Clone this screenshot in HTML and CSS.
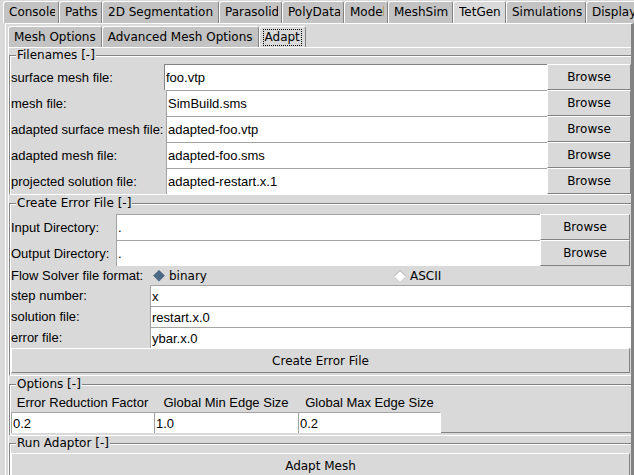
FILE: index.html
```html
<!DOCTYPE html>
<html>
<head>
<meta charset="utf-8">
<link rel="stylesheet" href="styles.css">
</head>
<body>
<div class="tabs1">
  <div class="tab w-console"><span>Console</span></div>
  <div class="tab w-paths"><span>Paths</span></div>
  <div class="tab w-seg"><span>2D Segmentation</span></div>
  <div class="tab w-para"><span>Parasolid</span></div>
  <div class="tab w-poly"><span>PolyData</span></div>
  <div class="tab w-mode"><span>Model</span></div>
  <div class="tab w-msim"><span>MeshSim</span></div>
  <div class="tab w-tet sel"><span>TetGen</span></div>
  <div class="tab w-sim"><span>Simulations</span></div>
  <div class="tab w-disp"><span>Display</span></div>
</div>
<div class="panel">
  <div class="tabs2">
    <div class="tab2">Mesh Options</div>
    <div class="tab2">Advanced Mesh Options</div>
    <div class="tab2 sel"><span class="focus">Adapt</span></div>
  </div>
  <div class="inner">
    <fieldset class="frame">
      <legend>Filenames [-]</legend>
      <div class="files">
        <div class="lbl">surface mesh file:</div><div class="entry first">foo.vtp</div><div class="btn">Browse</div>
        <div class="lbl">mesh file:</div><div class="entry">SimBuild.sms</div><div class="btn">Browse</div>
        <div class="lbl">adapted surface mesh file:</div><div class="entry">adapted-foo.vtp</div><div class="btn">Browse</div>
        <div class="lbl">adapted mesh file:</div><div class="entry">adapted-foo.sms</div><div class="btn">Browse</div>
        <div class="lbl">projected solution file:</div><div class="entry">adapted-restart.x.1</div><div class="btn">Browse</div>
      </div>
    </fieldset>
    <fieldset class="frame f-err">
      <legend>Create Error File [-]</legend>
      <div class="dirs">
        <div class="lbl">Input Directory:</div><div class="entry">.</div><div class="btn">Browse</div>
        <div class="lbl">Output Directory:</div><div class="entry">.</div><div class="btn">Browse</div>
      </div>
      <div class="flow">
        <div class="lbl">Flow Solver file format:</div>
        <div class="radio">
          <svg class="dia" width="12" height="12" viewBox="0 0 12 12"><polygon points="6,0.5 11.5,6 6,11.5 0.5,6" fill="#4a6984"/><polyline points="0.5,6 6,0.5 11.5,6" fill="none" stroke="#3a5470" stroke-width="1"/></svg>
          <span>binary</span>
        </div>
        <div class="radio">
          <svg class="dia" width="12" height="12" viewBox="0 0 12 12"><polygon points="6,0.5 11.5,6 6,11.5 0.5,6" fill="#ffffff"/><polyline points="0.5,6 6,0.5 11.5,6" fill="none" stroke="#a8a8a8" stroke-width="1"/></svg>
          <span>ASCII</span>
        </div>
      </div>
      <div class="steps">
        <div class="lbl">step number:</div><div class="entry">x</div>
        <div class="lbl">solution file:</div><div class="entry">restart.x.0</div>
        <div class="lbl">error file:</div><div class="entry">ybar.x.0</div>
      </div>
      <div class="btn wide">Create Error File</div>
    </fieldset>
    <fieldset class="frame f-opt">
      <legend>Options [-]</legend>
      <div class="opts">
        <div class="olbl">Error Reduction Factor</div>
        <div class="olbl">Global Min Edge Size</div>
        <div class="olbl">Global Max Edge Size</div>
        <div class="entry">0.2</div>
        <div class="entry">1.0</div>
        <div class="entry">0.2</div>
      </div>
    </fieldset>
    <fieldset class="frame f-run">
      <legend>Run Adaptor [-]</legend>
      <div class="btn wide run">Adapt Mesh</div>
    </fieldset>
  </div>
</div>
</body>
</html>
```
FILE: styles.css
```css
html, body {
  margin: 0;
  padding: 0;
}
body {
  width: 634px;
  height: 475px;
  overflow: hidden;
  background: #d9d9d9;
  color: #000;
  font: 13px "Liberation Sans", Arial, sans-serif;
}

/* outer notebook tabs */
.tabs1 {
  display: flex;
  align-items: flex-end;
  height: 23px;
  padding-left: 3px;
  box-sizing: border-box;
}
.tab {
  flex: none;
  height: 22px;
  box-sizing: border-box;
  background: #c3c3c3;
  border-top: 1px solid #fff;
  border-left: 1px solid #fff;
  border-right: 1px solid #828282;
  border-radius: 3px 3px 0 0;
  padding: 0 3px 0 5px;
  font: 12px "DejaVu Sans", sans-serif;
  line-height: 21px;
  white-space: nowrap;
  overflow: hidden;
}
.tab span {
  display: block;
  overflow: hidden;
  white-space: nowrap;
}
.tab.sel { background: #d9d9d9; }
.w-console { width: 56px; }
.w-paths { width: 43px; }
.w-seg { width: 117px; }
.w-para { width: 63px; }
.w-poly { width: 62px; }
.w-mode { width: 44px; }
.w-msim { width: 65px; }
.w-tet { width: 53px; }
.w-sim { width: 80px; }
.w-disp { width: 60px; }

/* outer panel */
.panel {
  margin-left: 5px;
  height: 452px;
  box-sizing: border-box;
  border-top: 1px solid #fff;
  border-left: 1px solid #fff;
  border-right: 3px solid #828282;
  padding-left: 1px;
  overflow: hidden;
}

/* inner notebook tabs */
.tabs2 {
  display: flex;
  align-items: flex-end;
  height: 23px;
  padding-left: 1px;
  box-sizing: border-box;
}
.tab2 {
  flex: none;
  height: 21px;
  box-sizing: border-box;
  background: #c3c3c3;
  border-top: 1px solid #fff;
  border-left: 1px solid #fff;
  border-right: 1px solid #828282;
  border-radius: 3px 3px 0 0;
  padding: 0 5px;
  font: 12px "DejaVu Sans", sans-serif;
  line-height: 20px;
  white-space: nowrap;
  display: flex;
  align-items: center;
}
.tab2.sel {
  background: #d9d9d9;
  padding: 0 3px;
}
.focus {
  display: block;
  border: 1px dotted #000;
  padding: 0 1px;
  line-height: 15px;
}

/* inner panel */
.inner {
  margin-left: 1px;
  border-top: 1px solid #fff;
  border-left: 1px solid #fff;
  height: 430px;
  overflow: hidden;
}

/* label frames */
.frame {
  margin: 0;
  padding: 0 0 0 1px;
  min-width: 0;
  border-style: solid;
  border-width: 1px 0 1px 1px;
  border-color: #828282 transparent #fff #828282;
  box-shadow: inset 1px 1px 0 #fff;
}
.frame legend {
  margin-left: 5px;
  padding: 0 1px;
  background: #d9d9d9;
  font: 12px "DejaVu Sans", sans-serif;
  line-height: 15px;
}
.f-err { margin-top: 1px; padding-bottom: 2px; }
.f-opt { margin-top: 1px; padding-bottom: 2px; box-shadow: inset 1px 1px 0 #fff, inset 0 -2px 0 #d9d9d9, inset 0 -3px 0 #828282; }
.f-run { margin-top: 0; }

.lbl {
  display: flex;
  align-items: center;
  white-space: nowrap;
}
.entry {
  display: flex;
  align-items: center;
  background: #fff;
  border-top: 1px solid #a3a3a3;
  border-left: 1px solid #a3a3a3;
  padding-left: 1px;
  white-space: nowrap;
  overflow: hidden;
  min-width: 0;
}
.entry.first {
  border-color: #828282;
}
.btn {
  display: flex;
  align-items: center;
  justify-content: center;
  box-sizing: border-box;
  background: #d9d9d9;
  border: 1px solid;
  border-color: #fff #828282 #828282 #fff;
  font: 12px "DejaVu Sans", sans-serif;
  white-space: nowrap;
}

/* filenames grid */
.files {
  margin-top: 1px;
  display: grid;
  grid-template-columns: 153px 1fr 84px;
  grid-auto-rows: 26px;
}
.files .entry { margin-left: 2px; }
.files .entry.first { margin-left: 0; }

/* create error file */
.dirs {
  margin-top: 3px;
  display: grid;
  grid-template-columns: 105px 424px 90px;
  grid-auto-rows: 26px;
}
.flow {
  display: grid;
  grid-template-columns: 140px 241px auto;
  height: 19px;
  align-items: center;
}
.radio {
  display: flex;
  align-items: center;
  font: 12px "DejaVu Sans", sans-serif;
  padding-left: 2px;
}
.radio .dia { display: block; margin-right: 4px; }
.steps {
  display: grid;
  grid-template-columns: 139px 1fr;
  grid-auto-rows: 21px;
}
.btn.wide {
  height: 25px;
  margin-right: 1px;
}
.btn.run {
  margin-top: 2px;
  height: 25px;
}

/* options */
.opts {
  display: grid;
  grid-template-columns: 143px 144px 143px;
  grid-template-rows: 20px 21px;
}
.olbl {
  display: flex;
  align-items: center;
  justify-content: center;
  white-space: nowrap;
}
.opts .entry:nth-child(6) { border-right: 1px solid #fff; }
```
